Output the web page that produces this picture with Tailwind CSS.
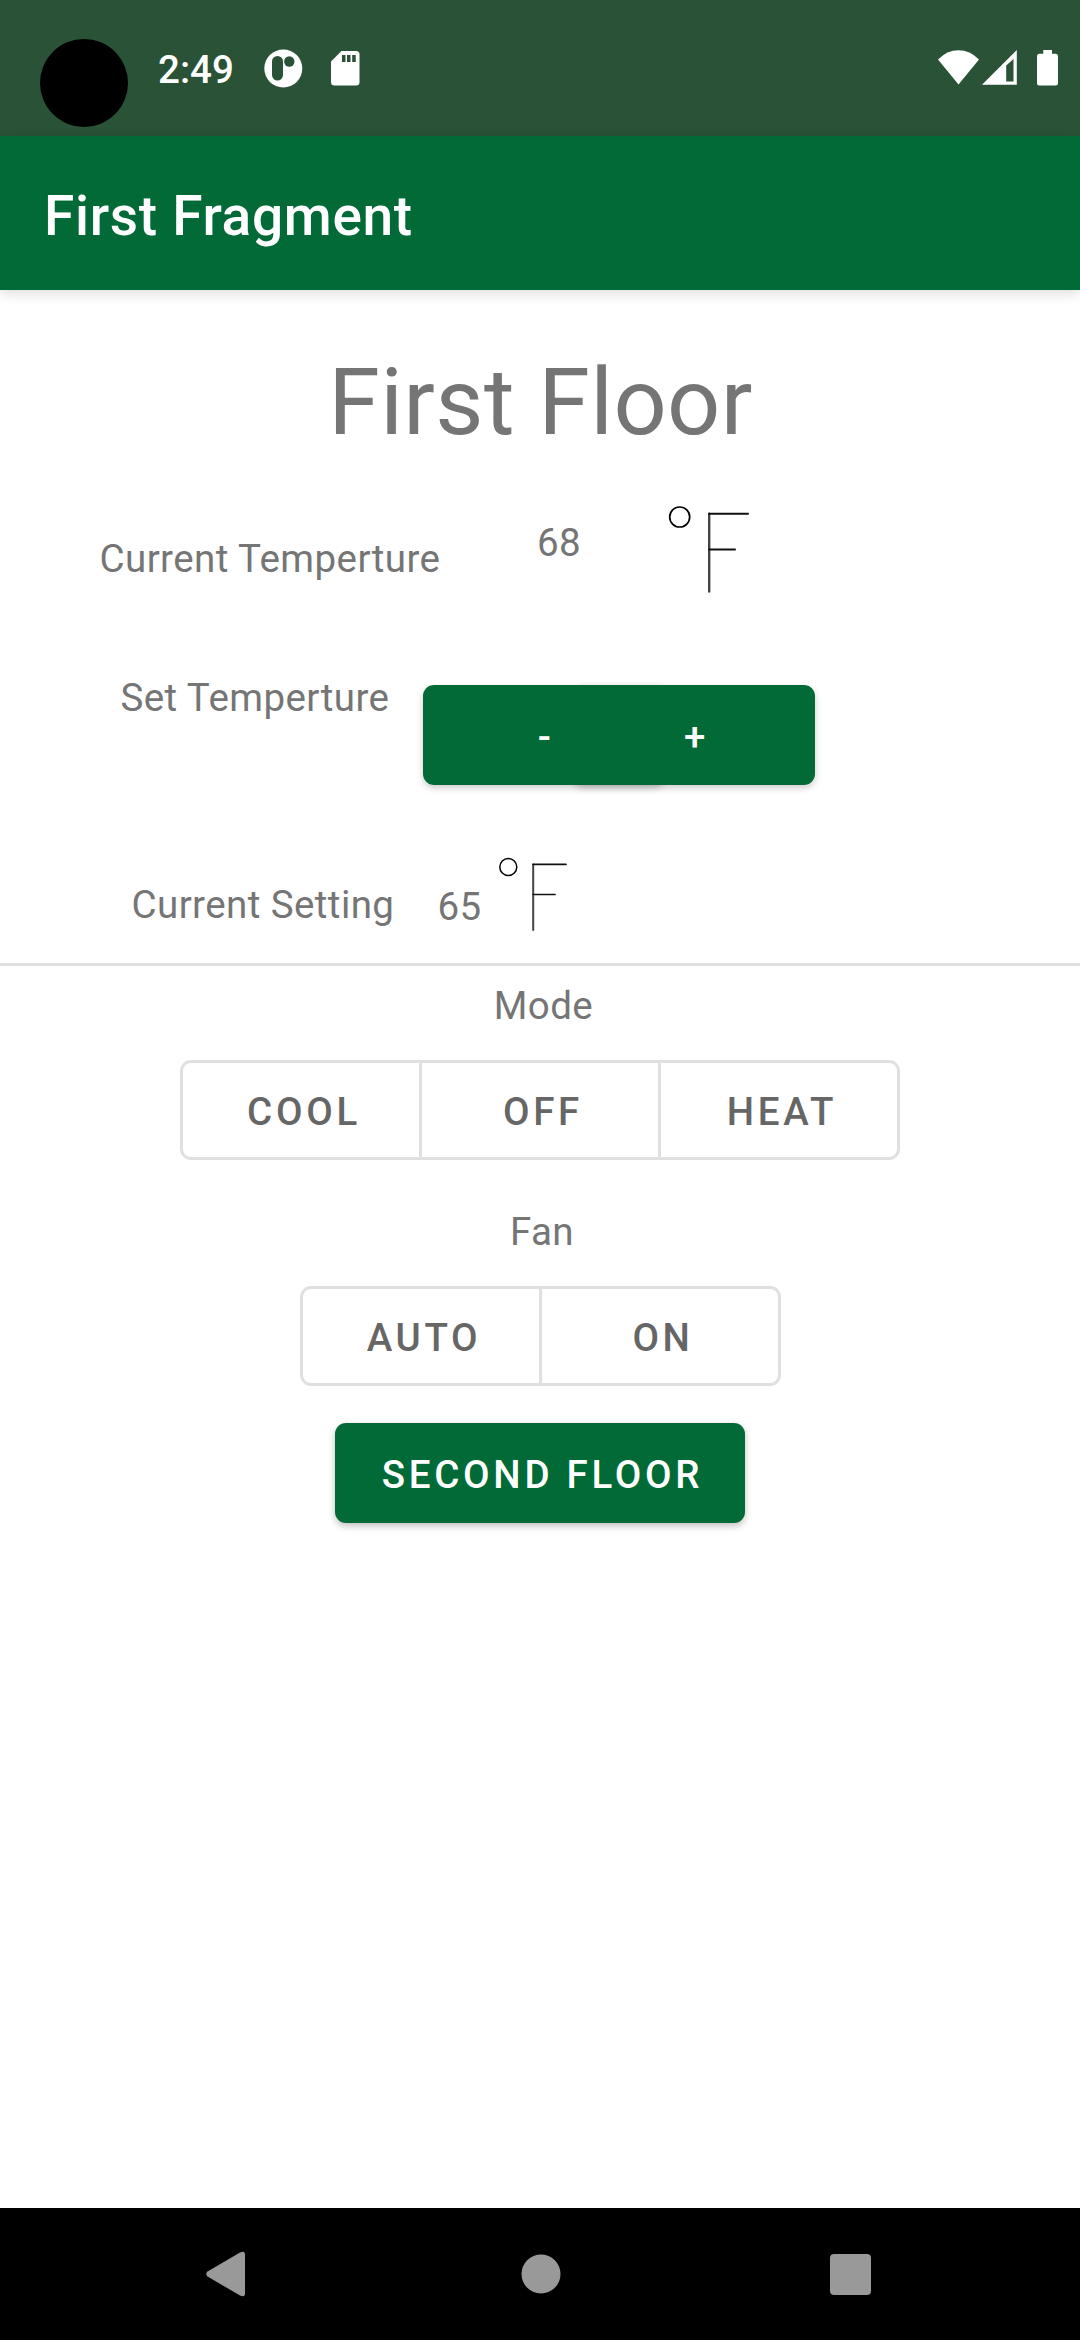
<!DOCTYPE html>
<html lang="en">
<head>
<meta charset="utf-8">
<title>First Fragment</title>
<script src="https://cdn.jsdelivr.net/npm/@tailwindcss/browser@4"></script>
</head>
<body class="bg-white">
<div class="flex h-[2340px] w-[1080px] flex-col overflow-hidden bg-white font-[Roboto,sans-serif] text-[38.5px] leading-[46px] tracking-[0.011em] text-[#757575]">

  <!-- Status bar -->
  <header class="flex h-[136px] shrink-0 items-start justify-between bg-[#2a5237] text-white">
    <div class="flex items-start">
      <div class="mt-[39px] ml-10 size-[88px] rounded-full bg-black"></div>
      <div class="mt-[47px] ml-[30px] w-[76px] font-medium tracking-normal">2:49</div>
      <svg class="mt-[49px] ml-[30px]" width="39" height="39" viewBox="0 0 39 39">
        <circle cx="19.3" cy="19.5" r="19" fill="#fff"/>
        <rect x="8" y="7" width="11" height="24.5" rx="5.5" fill="#2a5237"/>
        <circle cx="25.3" cy="12.5" r="5.2" fill="#2a5237"/>
      </svg>
      <svg class="mt-[51px] ml-[27.5px]" width="29" height="35" viewBox="0 0 29 35">
        <path d="M10.500 0H25q3.500 0 3.500 3.500V31q0 3.500-3.500 3.500H3.500Q0 34.500 0 31V10.500z" fill="#fff"/>
        <path d="M11 4h3.500v7H11zM16 4h3.500v7H16zM21.200 4h3.500v7h-3.500z" fill="#2a5237"/>
      </svg>
    </div>
    <div class="mt-[50px] mr-[22px] flex">
      <svg width="42" height="36" viewBox="0 0 42 36"><path d="M20.500 34.500L0 9.500Q9 .3 20.500.3T41 9.500z" fill="#fff"/></svg>
      <svg class="ml-[2px]" width="36" height="36" viewBox="0 0 36 36"><path fill-rule="evenodd" d="M0 34.700L34.800 0V34.700zM24.200 15.500V31.500H31.500V9z" fill="#fff"/></svg>
      <svg class="ml-[19px]" width="21" height="36" viewBox="0 0 21 36"><path d="M6.300 0h8.700v3.800h3.500q2.500 0 2.500 2.500V33q0 2.500-2.500 2.500h-16Q0 35.500 0 33V6.300q0-2.500 2.500-2.500h3.800z" fill="#fff"/></svg>
    </div>
  </header>

  <!-- App bar -->
  <div class="flex h-[154px] shrink-0 items-start bg-[#016a37] pt-[48px] pl-11 text-[55px] leading-[64px] font-medium tracking-[0.0125em] text-white shadow-[0_4px_12px_rgba(0,0,0,0.13)]">First Fragment</div>

  <main class="flex h-[1918px] shrink-0 flex-col">
    <h1 class="mt-[58px] h-[108px] pl-px text-center text-[93.500px] leading-[108px] tracking-[0.0035em]">First Floor</h1>

    <!-- Current temperature -->
    <div class="flex h-[180px] items-start">
      <div class="mt-[80px] ml-[99.500px] w-[437.500px]">Current Temperture</div>
      <div class="mt-[64px] w-[130px]">68</div>
      <svg class="mt-[46px]" width="90" height="96" viewBox="0 0 90 96" fill="none" stroke="#000">
        <circle cx="12.700" cy="15" r="10" stroke-width="1.700"/>
        <path d="M42.200 11.700V89.500" stroke="#444" stroke-width="2.400" stroke-linecap="round"/>
        <path d="M42 11.700H81M42 47.600H68" stroke="#111" stroke-width="2" stroke-linecap="round"/>
      </svg>
    </div>

    <!-- Set temperature: the two buttons overlap, deepening the shadow where they meet -->
    <div class="flex h-[184px] items-start">
      <div class="mt-[39px] ml-[120.500px] w-[302.500px]">Set Temperture</div>
      <div class="relative isolate mt-[49px] flex rounded-[11px] shadow-[0_3px_7px_rgba(0,0,0,0.2)]">
        <span class="absolute inset-y-0 left-[150px] -z-10 w-[92px] rounded-[11px] shadow-[0_3px_7px_rgba(0,0,0,0.2)]"></span>
        <button class="h-[100px] w-[242px] rounded-[11px] bg-[#016a37] pt-[3px] pl-[4px] font-medium tracking-[0.0893em] text-white">-</button>
        <button class="-ml-[92px] h-[100px] w-[242px] rounded-[11px] bg-[#016a37] pt-[3px] pl-[5px] font-medium tracking-[0.0893em] text-white">+</button>
      </div>
    </div>

    <!-- Current setting -->
    <div class="flex h-[146px] items-start border-b-[3px] border-[#e0e0e0]">
      <div class="mt-[62px] ml-[131.500px] w-[306px]">Current Setting</div>
      <div class="mt-[64px] w-[58.500px]">65</div>
      <svg class="mt-[30px]" width="76" height="86" viewBox="0 0 76 86" fill="none" stroke="#000">
        <circle cx="12.300" cy="17" r="8.500" stroke-width="1.500"/>
        <path d="M37.200 14.500V80" stroke="#444" stroke-width="2" stroke-linecap="round"/>
        <path d="M37 14.300H70M37 44.500H59" stroke="#111" stroke-width="1.700" stroke-linecap="round"/>
      </svg>
    </div>

    <!-- Mode -->
    <div class="mt-[17px] pl-[7px] text-center">Mode</div>
    <div class="mt-[31px] flex justify-center font-medium tracking-[0.096em] text-[#666]">
      <button class="h-[100px] w-[242px] rounded-l-[11px] border-3 border-[#e0e0e0] pt-[3px] pl-[6px]">COOL</button>
      <button class="-ml-[3px] h-[100px] w-[242px] border-3 border-[#e0e0e0] pt-[3px] pl-[6px]">OFF</button>
      <button class="-ml-[3px] h-[100px] w-[242px] rounded-r-[11px] border-3 border-[#e0e0e0] pt-[3px] pl-[6px]">HEAT</button>
    </div>

    <!-- Fan -->
    <div class="mt-[49px] pl-[4px] text-center">Fan</div>
    <div class="mt-[31px] ml-[300px] flex font-medium tracking-[0.096em] text-[#666]">
      <button class="h-[100px] w-[242px] rounded-l-[11px] border-3 border-[#e0e0e0] pt-[3px] pl-[6px]">AUTO</button>
      <button class="-ml-[3px] h-[100px] w-[242px] rounded-r-[11px] border-3 border-[#e0e0e0] pt-[3px] pl-[6px]">ON</button>
    </div>

    <button class="mt-[37px] h-[100px] w-[410px] self-center rounded-[11px] bg-[#016a37] pt-[3px] pl-[5px] font-medium tracking-[0.097em] text-white shadow-[0_3px_7px_rgba(0,0,0,0.25)]">SECOND FLOOR</button>
  </main>

  <!-- System navigation -->
  <nav class="flex h-[132px] shrink-0 items-center justify-between bg-black pr-[209px] pl-[206px]">
    <svg width="40" height="46" viewBox="0 0 40 46"><path d="M1.500 20.500L34 1.500Q39 -1 39 4V42Q39 47 34 44.500L1.500 25.500Q-1 23 1.500 20.500z" fill="#999"/></svg>
    <svg class="ml-[5px]" width="40" height="40" viewBox="0 0 40 40"><circle cx="20" cy="20" r="19.500" fill="#999"/></svg>
    <div class="size-[41px] rounded-[4px] bg-[#999]"></div>
  </nav>
</div>
</body>
</html>
